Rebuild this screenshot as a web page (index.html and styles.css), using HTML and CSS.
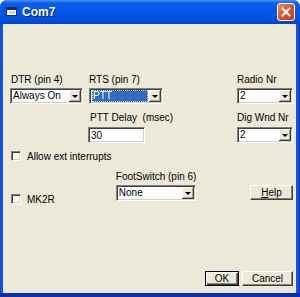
FILE: index.html
```html
<!DOCTYPE html>
<html lang="en">
<head>
  <meta charset="UTF-8">
  <title>Com7</title>
  <link rel="stylesheet" href="styles.css">
</head>
<body>
  <div class="window">
    <!-- Title bar -->
    <div class="titlebar">
      <svg class="title-icon" width="11" height="9" viewBox="0 0 11 9">
        <rect x="0.5" y="0.5" width="10" height="8" fill="#fff" stroke="#1c2c5c"/>
        <rect x="1" y="1" width="9" height="2" fill="#1c2c5c"/>
        <rect x="3" y="4" width="6" height="3" fill="#c8d4f0"/>
      </svg>
      <span class="title">Com7</span>
      <div class="close">
        <svg width="10" height="10" viewBox="0 0 10 10">
          <path d="M1.5 1.5 L8.5 8.5 M8.5 1.5 L1.5 8.5" stroke="#fff" stroke-width="2" stroke-linecap="square"/>
        </svg>
      </div>
    </div>

    <!-- Dialog contents -->
    <div class="client">
      <div class="row row-pins">
        <div class="field f-dtr">
          <div class="label">DTR (pin 4)</div>
          <div class="combo w-dtr"><span class="value">Always On</span><span class="arrow"></span></div>
        </div>
        <div class="field f-rts">
          <div class="label">RTS (pin 7)</div>
          <div class="combo w-rts"><span class="value selected">PTT</span><span class="arrow"></span></div>
        </div>
        <div class="field f-radio">
          <div class="label">Radio Nr</div>
          <div class="combo w-nr"><span class="value">2</span><span class="arrow"></span></div>
        </div>
      </div>

      <div class="row row-delay">
        <div class="field f-delay">
          <div class="label">PTT Delay&nbsp; (msec)</div>
          <div class="edit w-delay">30</div>
        </div>
        <div class="field f-dig">
          <div class="label">Dig Wnd Nr</div>
          <div class="combo w-nr"><span class="value">2</span><span class="arrow"></span></div>
        </div>
      </div>

      <div class="row row-check">
        <span class="checkbox"></span>
        <span class="check-label">Allow ext interrupts</span>
      </div>

      <div class="row row-foot">
        <div class="check-item">
          <span class="checkbox"></span>
          <span class="check-label">MK2R</span>
        </div>
        <div class="field f-foot">
          <div class="label">FootSwitch (pin 6)</div>
          <div class="combo w-foot"><span class="value">None</span><span class="arrow"></span></div>
        </div>
        <div class="btn btn-help"><u>H</u>elp</div>
      </div>

      <div class="row row-buttons">
        <div class="btn btn-ok">OK</div>
        <div class="btn btn-cancel">Cancel</div>
      </div>
    </div>
  </div>
</body>
</html>
```

FILE: styles.css
```css
body {
  margin: 0;
  font-family: "Liberation Sans", Arial, sans-serif;
  font-size: 10px;
  color: #000;
  background: #fff;
}

/* window frame */
.window {
  width: 300px;
  height: 297px;
  box-sizing: border-box;
  display: flex;
  flex-direction: column;
  background: linear-gradient(90deg, #0a3fcf 0, #1a63ec 2px, #0a48d8 3px, #0a48d8 296px, #1c5ee8 297px, #0a35b8 300px);
  border-radius: 7px 7px 0 0;
  border-bottom: 4px solid #0a2fb0;
}

.titlebar {
  height: 24px;
  flex: none;
  display: flex;
  align-items: center;
  border-radius: 7px 7px 0 0;
  background: linear-gradient(#4a96ff 0, #0c5eea 3px, #0356e6 12px, #0150e0 20px, #0242c8 24px);
}

.title-icon {
  margin-left: 6px;
  margin-top: -1px;
}

.title {
  margin-left: 5px;
  margin-top: -1px;
  color: #fff;
  font-size: 12px;
  font-weight: bold;
  text-shadow: 1px 1px #0a1f7a;
}

.close {
  margin-left: auto;
  margin-right: 5px;
  width: 18px;
  height: 18px;
  box-sizing: border-box;
  border: 1px solid #fff;
  border-radius: 3px;
  background: linear-gradient(135deg, #ec8a68 0, #d9532d 50%, #c23c18 100%);
  display: flex;
  align-items: center;
  justify-content: center;
}

.client {
  flex: 1;
  margin: 0 4px 0 3px;
  background: #ece9d8;
  display: flex;
  flex-direction: column;
}

.row {
  display: flex;
}

.field {
  flex: none;
}

.label {
  height: 12px;
  line-height: 12px;
  white-space: nowrap;
}

/* sunken fields */
.combo, .edit {
  box-sizing: border-box;
  height: 16px;
  background: #fff;
  border: 1px solid;
  border-color: #808080 #fff #fff #808080;
  box-shadow: inset 1px 1px #404040, inset -1px -1px #d4d0c8;
  display: flex;
  align-items: center;
  padding-left: 2px;
}

.value {
  line-height: 12px;
}

.value.selected {
  flex: 1;
  margin: 1px 1px 1px 0;
  padding-left: 1px;
  background: #316ac5;
  color: #fff;
  outline: 1px dotted #e0e0a0;
  outline-offset: -1px;
}

.arrow {
  margin-left: auto;
  margin-right: 1px;
  width: 12px;
  height: 12px;
  flex: none;
  box-sizing: border-box;
  background: #ece9d8;
  box-shadow: inset -1px -1px #404040, inset 1px 1px #fff, inset -2px -2px #a0a0a0;
  display: flex;
  align-items: center;
  justify-content: center;
}

.arrow::after {
  content: "";
  border-left: 3px solid transparent;
  border-right: 3px solid transparent;
  border-top: 3px solid #000;
  margin-top: 1px;
}

.w-dtr { width: 73px; }
.w-rts { width: 74px; }
.w-nr { width: 56px; }
.w-delay { width: 57px; }
.w-foot { width: 80px; }

/* top row: DTR / RTS / Radio Nr */
.row-pins {
  margin-top: 50px;
}

.row-pins .label { margin-bottom: 2px; padding-left: 1px; }
.f-dtr { margin-left: 7px; }
.f-rts { margin-left: 6px; }
.f-rts .label { padding-left: 0; }
.f-radio { margin-left: 74px; }
.f-radio .label { padding-left: 0; }

/* PTT delay / Dig Wnd Nr */
.row-delay {
  margin-top: 8px;
}

.f-delay { margin-left: 85px; width: 57px; }
.f-delay .label { margin-bottom: 3px; padding-left: 2px; }
.f-dig { margin-left: 92px; }
.f-dig .label { margin-bottom: 3px; }

/* checkboxes */
.row-check {
  margin-top: 7px;
  margin-left: 8px;
  align-items: center;
  height: 12px;
}

.checkbox {
  width: 10px;
  height: 10px;
  box-sizing: border-box;
  background: #fff;
  border: 1px solid;
  border-color: #808080 #fff #fff #808080;
  box-shadow: inset 1px 1px #404040, inset -1px -1px #d4d0c8;
  flex: none;
}

.check-label {
  margin-left: 6px;
  white-space: nowrap;
}

/* footswitch row */
.row-foot {
  margin-top: 9px;
  margin-left: 8px;
  align-items: flex-end;
}

.check-item {
  display: flex;
  align-items: center;
  height: 12px;
  margin-bottom: -4px;
}

.f-foot { margin-left: 61px; width: 80px; }
.f-foot .label { margin-bottom: 2px; }

/* push buttons */
.btn {
  box-sizing: border-box;
  height: 15px;
  background: #ece9d8;
  border: 1px solid;
  border-color: #fff #404040 #404040 #fff;
  box-shadow: inset -1px -1px #808080;
  display: flex;
  align-items: center;
  justify-content: center;
}

.btn-help {
  width: 43px;
  margin-left: auto;
  margin-right: 3px;
  margin-bottom: 1px;
}

.row-buttons {
  margin-top: auto;
  margin-bottom: 7px;
  justify-content: flex-end;
  padding-right: 3px;
  gap: 3px;
}

.btn-ok {
  width: 34px;
  border-color: #000;
  box-shadow: inset 1px 1px #fff, inset -1px -1px #404040, inset -2px -2px #808080;
}

.btn-cancel {
  width: 51px;
}
```
